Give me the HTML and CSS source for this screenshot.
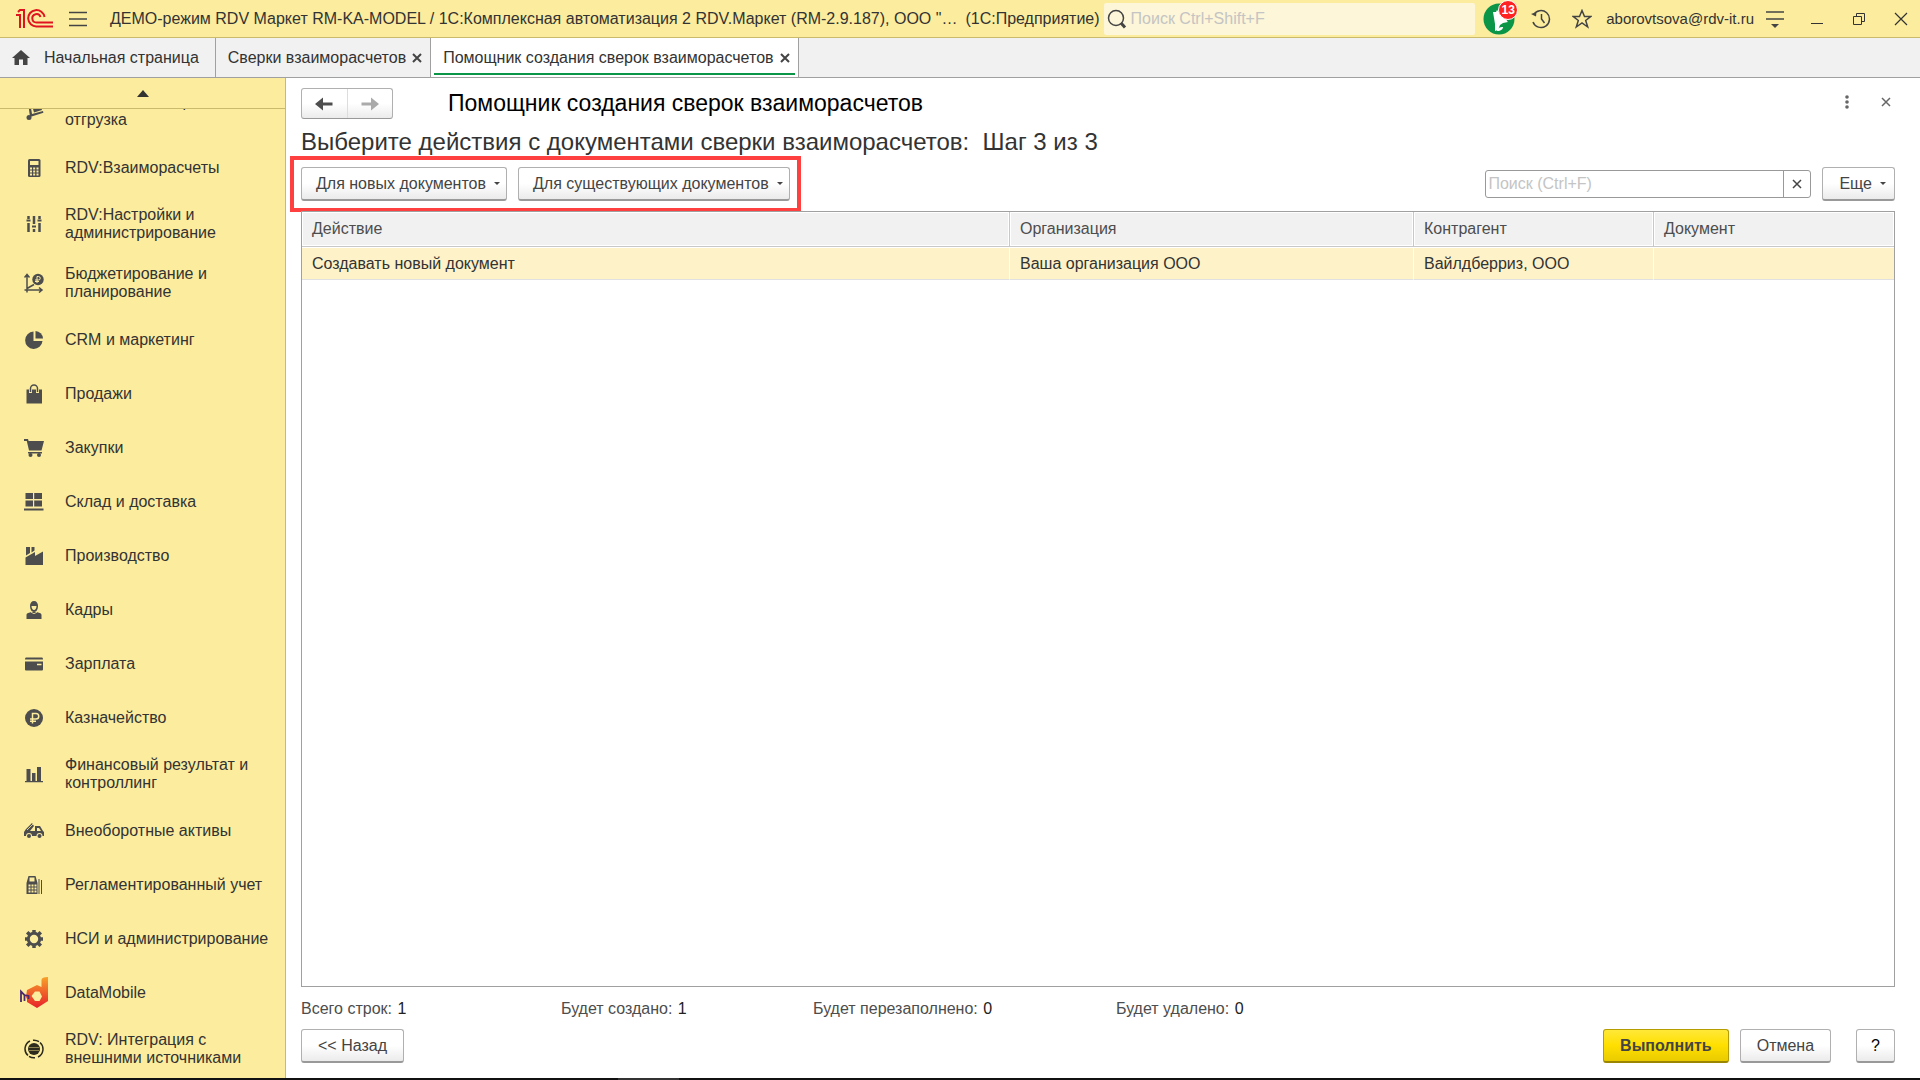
FILE: index.html
```html
<!DOCTYPE html>
<html lang="ru">

<head>
    <meta charset="UTF-8">
    <meta name="viewport" content="width=device-width, initial-scale=1.0">
    <title>Помощник создания сверок взаиморасчетов</title>
    <link rel="stylesheet" href="styles.css">
</head>

<body>
    <header class="topbar">
        <svg class="logo" viewBox="0 0 37 19" width="37" height="19" fill="none" stroke="#e0141e" stroke-width="2">
            <path d="M0 6h4v13M2 3l2-2h4v18" />
            <path d="M37 17.500H20.500a8.200 8.200 0 1 1 8-9.500" />
            <path d="M37 13.500H20.500a4.200 4.200 0 1 1 4-5.500" />
        </svg>
        <button class="icon_btn menu_btn" aria-label="Меню">
            <svg viewBox="0 0 18 18" width="18" height="18" stroke="#444" stroke-width="1.500"><path d="M0 2.500h18M0 9h18M0 15.500h18" /></svg>
        </button>
        <div class="app_title">ДЕМО-режим RDV Маркет RM-KA-MODEL / 1С:Комплексная автоматизация 2 RDV.Маркет (RM-2.9.187), ООО "…</div>
        <div class="app_name">(1С:Предприятие)</div>
        <label class="top_search">
            <svg viewBox="0 0 20 20" width="20" height="20" fill="none" stroke="#444"><circle cx="9" cy="9" r="7.500" stroke-width="1.500" /><path d="M14 14l4 4.500" stroke-width="3" /></svg>
            <input type="text" placeholder="Поиск Ctrl+Shift+F" aria-label="Поиск">
        </label>
        <button class="icon_btn bell_btn" aria-label="Оповещения">
            <svg viewBox="0 0 32 32" width="32" height="32"><circle cx="16" cy="16" r="15.500" fill="#0b9547" /><path d="M10 9l3 0 1-2 2 2c5 1 7 4 8 9l1 1-5 1-3 2-2 5-3 1 0-7-1-6z" fill="#fff" /><path d="M14 28c0-3 3-4 6-4 0 2-2 4-6 4z" fill="#fff" /></svg>
            <span class="badge">13</span>
        </button>
        <button class="icon_btn history_btn" aria-label="История">
            <svg viewBox="0 0 20 20" width="20" height="20" fill="none" stroke="#444" stroke-width="1.500"><path d="M2.500 6a8.500 8.500 0 1 1-.5 7M10.500 5v5l3 4" /><path d="M0 5l5 2.500L5.500 3z" fill="#444" stroke="none" /></svg>
        </button>
        <button class="icon_btn star_btn" aria-label="Избранное">
            <svg viewBox="0 0 20 20" width="20" height="20" fill="none" stroke="#444" stroke-width="1.500"><path d="M10 1.500l2.500 6h6.200l-5 4 2 6.500-5.700-4-5.700 4 2-6.500-5-4h6.200z" /></svg>
        </button>
        <a class="user" href="#">aborovtsova@rdv-it.ru</a>
        <button class="icon_btn settings_btn" aria-label="Настройки">
            <svg viewBox="0 0 18 17" width="18" height="17" stroke="#444" stroke-width="1.500"><path d="M0 1h18M0 8h18" /><path d="M5 13h8l-4 4z" fill="#444" stroke="none" /></svg>
        </button>
        <div class="win_btns">
            <button class="icon_btn" aria-label="Свернуть"><svg viewBox="0 0 14 14" width="14" height="14" stroke="#333"><path d="M1 11.500h12" /></svg></button>
            <button class="icon_btn" aria-label="Развернуть"><svg viewBox="0 0 14 14" width="14" height="14" fill="none" stroke="#333"><path d="M1.500 4.500h8v8h-8zM4.500 4v-2.500h8v8H10" /></svg></button>
            <button class="icon_btn" aria-label="Закрыть"><svg viewBox="0 0 14 14" width="14" height="14" stroke="#333" stroke-width="1.200"><path d="M1 1l12 12M13 1L1 13" /></svg></button>
        </div>
    </header>

    <nav class="tabs">
        <a class="tab tab_home" href="#">
            <svg viewBox="0 0 18 15" width="18" height="15" fill="#444"><path d="M9 0l9 8h-2.500v7H11V9.500H7V15H2.500V8H0z" /></svg>
            Начальная страница
        </a>
        <div class="tab"><a href="#">Сверки взаиморасчетов</a>
            <button class="icon_btn" aria-label="Закрыть вкладку"><svg viewBox="0 0 10 10" width="10" height="10" stroke="#444" stroke-width="2"><path d="M1 1l8 8M9 1L1 9" /></svg></button>
        </div>
        <div class="tab tab_active"><a href="#">Помощник создания сверок взаиморасчетов</a>
            <button class="icon_btn" aria-label="Закрыть вкладку"><svg viewBox="0 0 10 10" width="10" height="10" stroke="#444" stroke-width="2"><path d="M1 1l8 8M9 1L1 9" /></svg></button>
        </div>
    </nav>

    <div class="content">
        <aside class="sidebar">
            <button class="scroll_up" aria-label="Вверх"><svg viewBox="0 0 12 7" width="12" height="7" fill="#333"><path d="M6 0l6 7H0z" /></svg></button>
            <div class="menu_box">
                <ul class="menu">
                    <li><a href="#">
                        <svg viewBox="0 0 20 20" width="20" height="20" fill="#4d4d4d"><path d="M4 1h2l2 12 11-3 .4 1.800L6 16z" /><path d="M8 4l8-2 2 7-8 2.500z" /><path d="M11 5.500l3-.8.6 2-3 .8z" fill="#fbec9e" /><circle cx="5" cy="16.500" r="2.500" /></svg>
                        <span>RDV:Новый сбор и<br>отгрузка</span></a></li>
                    <li><a href="#">
                        <svg viewBox="0 0 20 20" width="20" height="20"><rect x="4" y="1" width="12.500" height="18" rx="1.500" fill="#4d4d4d" /><path d="M6 3h8.500v4H6zM6 9.500h2v2H6zm3.200 0h2v2h-2zm3.300 0h2v2h-2zM6 12.500h2v2H6zm3.200 0h2v2h-2zm3.300 0h2v2h-2zM6 15.500h2v2H6zm3.200 0h2v2h-2zm3.300 0h2v2h-2z" fill="#fbec9e" /></svg>
                        <span>RDV:Взаиморасчеты</span></a></li>
                    <li><a href="#">
                        <svg viewBox="0 0 20 20" width="20" height="20" stroke="#4d4d4d" fill="none"><path d="M4.500 2v3M4.500 9v9M10 2v8M10 15v3M15.500 2v3M15.500 9v9" stroke-width="2.500" /><path d="M2.500 6.500h4M8 12.500h4M13.500 6.500h4" stroke-width="2" /></svg>
                        <span>RDV:Настройки и администрирование</span></a></li>
                    <li><a href="#">
                        <svg viewBox="0 0 20 20" width="20" height="20" stroke="#4d4d4d" fill="none" stroke-width="1.500"><path d="M3 2v15h15M.5 17H3v2.500M.5 4.500L3 1.500l2.500 3M15 14.500l3 2.500-3 2.500M3 15.500l7-4" /><circle cx="14" cy="6.500" r="5.700" fill="#4d4d4d" stroke="none" /><path d="M13 10V3.500h1.500a1.600 1.600 0 0 1 0 3.500H11M11 8.500h4" stroke="#fbec9e" stroke-width="1" /></svg>
                        <span>Бюджетирование и планирование</span></a></li>
                    <li><a href="#">
                        <svg viewBox="0 0 20 20" width="20" height="20" fill="#4d4d4d"><path d="M9.500 1.500a8.700 8.700 0 1 0 9 9.500H9.500z" /><path d="M11.500 1v7.500h7.500A8 8 0 0 0 11.500 1z" /></svg>
                        <span>CRM и маркетинг</span></a></li>
                    <li><a href="#">
                        <svg viewBox="0 0 20 20" width="20" height="20"><path d="M2.500 5.500H18V19.500H2.500z" fill="#4d4d4d" /><path d="M6.500 9V5a3.500 3.500 0 0 1 7 0v4" fill="none" stroke="#fbec9e" stroke-width="3" /><path d="M6.500 8V4.500a3.500 3.500 0 0 1 7 0V8" fill="none" stroke="#4d4d4d" stroke-width="1.500" /></svg>
                        <span>Продажи</span></a></li>
                    <li><a href="#">
                        <svg viewBox="0 0 20 20" width="20" height="20" fill="#4d4d4d"><path d="M0 1h4l.6 2H20l-2.500 9.500H5L2.800 3H0zM4 14h14v1.500H4z" /><circle cx="6.500" cy="17" r="2" /><circle cx="15" cy="17" r="2" /></svg>
                        <span>Закупки</span></a></li>
                    <li><a href="#">
                        <svg viewBox="0 0 20 20" width="20" height="20" fill="#4d4d4d"><path d="M1.500 1H9v6H1.500zM10.200 1H18v6h-7.800zM1.500 8.500H9v6H1.500zM10.200 8.500H18v6h-7.800zM0 16.500h19.500v2H0z" /></svg>
                        <span>Склад и доставка</span></a></li>
                    <li><a href="#">
                        <svg viewBox="0 0 20 20" width="20" height="20" fill="#4d4d4d"><path d="M1.500 19V11.500L11 6v4l8-4.500V19zM2 1h4v6L2 9.500zM7.500 1h3v3.500l-3 2z" /></svg>
                        <span>Производство</span></a></li>
                    <li><a href="#">
                        <svg viewBox="0 0 20 20" width="20" height="20"><path d="M2.500 19v-4c0-2 3-2.500 5-3h5c2 .5 5 1 5 3v4z" fill="#4d4d4d" /><path d="M6 6c0-3 1.500-5 4-5s4 2 4 5c0 3-1.500 6-4 6S6 9 6 6z" fill="#4d4d4d" /><path d="M7.500 6h5c0 2-1 4-2.500 4s-2.500-2-2.500-4z" fill="#fbec9e" /><path d="M7 12.200l3 1.500 3-1.500" fill="none" stroke="#fbec9e" stroke-width=".8" /></svg>
                        <span>Кадры</span></a></li>
                    <li><a href="#">
                        <svg viewBox="0 0 20 20" width="20" height="20" fill="#4d4d4d"><path d="M1 5.500q0-2 1-2h16q1 0 1 2zM1 7.500h18v8q0 1-1 1H2q-1 0-1-1z" /><path d="M13 10.500h4.500" stroke="#fbec9e" stroke-width="1.500" /></svg>
                        <span>Зарплата</span></a></li>
                    <li><a href="#">
                        <svg viewBox="0 0 20 20" width="20" height="20"><circle cx="10" cy="10" r="9" fill="#4d4d4d" /><path d="M8.500 15.500V5.500h3.500a2.500 2.500 0 0 1 0 5.500H6M6 13.200h6" fill="none" stroke="#fbec9e" stroke-width="1.500" /></svg>
                        <span>Казначейство</span></a></li>
                    <li><a href="#">
                        <svg viewBox="0 0 20 20" width="20" height="20" fill="#4d4d4d"><path d="M1 17h18v1.200H1zM2.500 5H6.500v12h-4zM8 9h3.500v8H8zM13 3h4v14h-4z" /></svg>
                        <span>Финансовый результат и контроллинг</span></a></li>
                    <li><a href="#">
                        <svg viewBox="0 0 20 20" width="20" height="20" fill="#4d4d4d"><path d="M0 15v-4l2-3 6-6 2 3-4 5h5V5h5l3 5 1 1v4zM13 7v3h4l-2-3z" fill-rule="evenodd" /><path d="M3 9l6-6" stroke="#fbec9e" stroke-width=".8" /><circle cx="5" cy="15" r="3" fill="#fbec9e" /><circle cx="15.500" cy="15" r="3" fill="#fbec9e" /><circle cx="5" cy="15" r="2" /><circle cx="15.500" cy="15" r="2" /></svg>
                        <span>Внеоборотные активы</span></a></li>
                    <li><a href="#">
                        <svg viewBox="0 0 20 20" width="20" height="20"><path d="M2.500 8l2-7h7l2 7v11h-11zM14.500 4v15h1V4zM17 5v14h1V5z" fill="#4d4d4d" /><path d="M5.500 2.500h5v4h-5zM4.500 9.500h2v2h-2zm3 0h2v2h-2zm3 0h2v2h-2zM4.500 12.500h2v2h-2zm3 0h2v2h-2zm3 0h2v2h-2zM4.500 15.500h2v2h-2zm3 0h2v2h-2zm3 0h2v2h-2z" fill="#fbec9e" /></svg>
                        <span>Регламентированный учет</span></a></li>
                    <li><a href="#">
                        <svg viewBox="0 0 20 20" width="20" height="20" fill="none" stroke="#4d4d4d"><circle cx="10" cy="10" r="5.700" stroke-width="3" /><path d="M10 1v3M10 16v3M1 10h3M16 10h3M3.200 3.200l2.400 2.400M14.400 14.400l2.400 2.400M3.200 16.800l2.400-2.400M14.400 5.600l2.400-2.400" stroke-width="3.500" /></svg>
                        <span>НСИ и администрирование</span></a></li>
                    <li><a href="#" class="wide">
                        <svg viewBox="0 0 28 32" width="28" height="32">
                            <linearGradient id="dm" x1="0" y1="0" x2="0" y2="1"><stop offset="0" stop-color="#f7a128" /><stop offset="1" stop-color="#e8202a" /></linearGradient>
                            <path d="M21.500 3q0-3 6.500-3v24l-11 7-10-6V22l-1-2 1-7 10-5 4.500 2zM15 14.500l-3.500 4.500 3.500 5h4.500l2.500-4.500-2.500-5z" fill="url(#dm)" fill-rule="evenodd" />
                            <path d="M1 25V14.500l3.500 3.500v6M4.500 18l4 1v3" fill="none" stroke="#4b2a6b" stroke-width="1.800" />
                        </svg>
                        <span>DataMobile</span></a></li>
                    <li><a href="#">
                        <svg viewBox="0 0 20 20" width="20" height="20" fill="none" stroke="#2c2a1c"><circle cx="10" cy="10" r="6" fill="#2c2a1c" stroke="none" /><path d="M5 8.500h10M5 11.500h10" stroke="#8b8250" /><path d="M4 16.500a8.800 8.800 0 0 1 2-14.500M16 3.500a8.800 8.800 0 0 1-2 14.500M9 1.200a9 9 0 0 1 6 1.500M11 18.800a9 9 0 0 1-6-1.500" stroke-width="1.500" /></svg>
                        <span>RDV: Интеграция с внешними источниками</span></a></li>
                </ul>
            </div>
        </aside>

        <main class="main">
            <div class="page_head">
                <div class="nav_btns">
                    <button aria-label="Назад"><svg viewBox="0 0 18 14" width="18" height="14" fill="#4d4d4d"><path d="M0 7l8-6.500V5.500h9.500v3H8v5z" /></svg></button>
                    <button aria-label="Вперед"><svg viewBox="0 0 18 14" width="18" height="14" fill="#aaa"><path d="M18 7l-8-6.500V5.500H.5v3H10v5z" /></svg></button>
                </div>
                <h1>Помощник создания сверок взаиморасчетов</h1>
                <div class="head_tools">
                    <button class="icon_btn" aria-label="Еще действия"><svg viewBox="0 0 14 14" width="14" height="14" fill="#666"><circle cx="7" cy="2" r="1.800" /><circle cx="7" cy="7" r="1.800" /><circle cx="7" cy="12" r="1.800" /></svg></button>
                    <button class="icon_btn" aria-label="Закрыть"><svg viewBox="0 0 14 14" width="14" height="14" stroke="#666" stroke-width="1.500"><path d="M3 3l8 8M11 3l-8 8" /></svg></button>
                </div>
            </div>
            <h2>Выберите действия с документами сверки взаиморасчетов:&nbsp; Шаг 3 из 3</h2>

            <div class="toolbar">
                <div class="marked">
                    <button class="btn drop">Для новых документов</button>
                    <button class="btn drop">Для существующих документов</button>
                </div>
                <div class="find">
                    <input type="text" placeholder="Поиск (Ctrl+F)" aria-label="Поиск (Ctrl+F)">
                    <button aria-label="Очистить"><svg viewBox="0 0 10 10" width="10" height="10" stroke="#444" stroke-width="1.500"><path d="M1 1l8 8M9 1L1 9" /></svg></button>
                </div>
                <button class="btn drop more">Еще</button>
            </div>

            <div class="table_box">
                <table>
                    <thead>
                        <tr>
                            <th class="col_action">Действие</th>
                            <th class="col_org">Организация</th>
                            <th class="col_partner">Контрагент</th>
                            <th>Документ</th>
                        </tr>
                    </thead>
                    <tbody>
                        <tr>
                            <td>Создавать новый документ</td>
                            <td>Ваша организация ООО</td>
                            <td>Вайлдберриз, ООО</td>
                            <td></td>
                        </tr>
                    </tbody>
                </table>
            </div>

            <div class="stats">
                <div>Всего строк: <b>1</b></div>
                <div>Будет создано: <b>1</b></div>
                <div>Будет перезаполнено: <b>0</b></div>
                <div>Будет удалено: <b>0</b></div>
            </div>

            <div class="actions">
                <button class="btn back">&lt;&lt; Назад</button>
                <button class="btn run">Выполнить</button>
                <button class="btn">Отмена</button>
                <button class="btn help">?</button>
            </div>
        </main>
    </div>
    <div class="taskbar"><span></span></div>
</body>

</html>
```

FILE: styles.css
```css
* {
    box-sizing: border-box;
}

body {
    margin: 0;
    height: 100vh;
    display: flex;
    flex-direction: column;
    overflow: hidden;
    font-family: "Liberation Sans", Arial, sans-serif;
    font-size: 16px;
    line-height: 18px;
    color: #333;
    background-color: #fff;
}

a {
    color: inherit;
    text-decoration: none;
}

button,
input {
    font: inherit;
    color: inherit;
}

svg {
    display: block;
    flex: none;
}

.icon_btn {
    display: flex;
    padding: 0;
    border: 0;
    background: none;
    cursor: pointer;
}

/* верхняя панель */
.topbar {
    flex: none;
    display: flex;
    align-items: center;
    height: 38px;
    padding: 0 12px 0 16px;
    background-color: #fbec9e;
    border-bottom: 1px solid #c9bb6b;
    white-space: nowrap;
}

.menu_btn {
    margin: 0 23px 0 16px;
}

.app_name {
    margin: 0 4px 0 8px;
}

.top_search {
    flex: 1;
    display: flex;
    align-items: center;
    gap: 4px;
    height: 32px;
    padding-left: 3px;
    border-radius: 2px;
    background-color: #fdf6d8;
}

.top_search input {
    flex: 1;
    min-width: 0;
    padding: 0;
    border: 0;
    background: none;
    outline: none;
}

input::placeholder {
    color: #c4c4c4;
    opacity: 1;
}

.bell_btn {
    position: relative;
    margin: 0 16px 0 8px;
}

.badge {
    position: absolute;
    top: -3px;
    right: -3px;
    width: 20px;
    height: 20px;
    border: 1px solid #fff;
    border-radius: 50%;
    background-color: #f22;
    color: #fff;
    font-size: 12px;
    font-weight: bold;
    line-height: 18px;
    text-align: center;
}

.history_btn {
    margin-right: 21px;
}

.star_btn {
    margin-right: 14px;
}

.user {
    font-size: 15px;
}

.settings_btn {
    margin: 2px 26px 0 12px;
}

.win_btns {
    display: flex;
    gap: 28px;
}

/* вкладки */
.tabs {
    flex: none;
    display: flex;
    height: 40px;
    background-color: #f1f1f1;
    border-bottom: 1px solid #a0a0a0;
    white-space: nowrap;
}

.tab {
    display: flex;
    align-items: center;
    gap: 6px;
    padding: 0 8px 0 12px;
    border-right: 1px solid #a0a0a0;
}

.tab_home {
    gap: 14px;
    padding-right: 16px;
}

.tab_active {
    background-color: #fff;
    background-image: linear-gradient(#0b9547, #0b9547);
    background-repeat: no-repeat;
    background-size: calc(100% - 6px) 2px;
    background-position: 3px 35px;
}

.content {
    flex: 1;
    display: flex;
    min-height: 0;
}

/* меню разделов */
.sidebar {
    flex: none;
    display: flex;
    flex-direction: column;
    width: 286px;
    background-color: #fbec9e;
    border-right: 1px solid #c9bb6b;
}

.scroll_up {
    flex: none;
    display: flex;
    align-items: center;
    justify-content: center;
    height: 31px;
    border: 0;
    border-bottom: 1px solid #c9bb6b;
    background: none;
}

.menu_box {
    flex: 1;
    min-height: 0;
    overflow: hidden;
}

/* список прокручен на половину первого пункта */
.menu {
    margin: -28px 0 0;
    padding: 0;
    list-style: none;
}

.menu a {
    display: flex;
    align-items: center;
    gap: 21px;
    min-height: 54px;
    padding: 12px 16px 11px 24px;
}

.menu .wide {
    gap: 17px;
    padding: 2px 16px 0 20px;
}

/* рабочая область */
.main {
    flex: 1;
    display: flex;
    flex-direction: column;
    min-width: 0;
    padding: 10px 25px 15px 15px;
}

.page_head {
    display: flex;
    align-items: flex-start;
}

.nav_btns {
    display: flex;
    width: 92px;
    height: 31px;
    border: 1px solid #b0b0b0;
    border-bottom-color: #999;
    border-radius: 3px;
    background-image: linear-gradient(#fff 50%, #ebebeb);
}

.nav_btns button {
    flex: 1;
    display: flex;
    align-items: center;
    justify-content: center;
    padding: 0;
    border: 0;
    background: none;
}

.nav_btns button + button {
    border-left: 1px solid #ddd;
}

h1 {
    margin: 0 0 0 55px;
    font-size: 23px;
    font-weight: normal;
    line-height: 30px;
    color: #000;
}

.head_tools {
    display: flex;
    gap: 25px;
    margin-left: auto;
    padding: 7px 2px 0 0;
}

h2 {
    margin: 8px 0 10px;
    font-size: 24px;
    font-weight: normal;
    line-height: 30px;
}

.toolbar {
    display: flex;
    align-items: center;
    gap: 11px;
}

/* рамка вокруг двух кнопок */
.marked {
    display: flex;
    gap: 11px;
    margin-right: auto;
    outline: 4px solid #ff4040;
    outline-offset: 7px;
}

.btn {
    height: 34px;
    padding: 0 16px;
    border: 1px solid #b0b0b0;
    border-bottom: 2px solid #999;
    border-radius: 3px;
    background-image: linear-gradient(#fff 50%, #ebebeb);
    color: #444;
    white-space: nowrap;
}

.drop {
    display: flex;
    align-items: center;
    gap: 8px;
    padding: 0 6px 0 14px;
}

.drop::after {
    content: "";
    border: 3px solid transparent;
    border-top-color: #444;
    border-bottom: 0;
}

.more {
    padding: 0 8px 0 16px;
}

.find {
    display: flex;
    width: 326px;
    height: 28px;
    border: 1px solid #999;
    border-radius: 3px;
}

.find input {
    flex: 1;
    min-width: 0;
    padding: 0 2px;
    border: 0;
    background: none;
    outline: none;
}

.find button {
    display: flex;
    align-items: center;
    justify-content: center;
    width: 27px;
    padding: 0;
    border: 0;
    border-left: 1px solid #999;
    background: none;
}

.table_box {
    flex: 1;
    margin-top: 10px;
    border: 1px solid #a0a0a0;
}

table {
    width: 100%;
    border-spacing: 0;
    table-layout: fixed;
}

th,
td {
    padding: 0 10px;
    text-align: left;
    font-weight: normal;
}

th {
    height: 35px;
    border-right: 1px solid #c8c8c8;
    border-bottom: 1px solid #c8c8c8;
    background-color: #f1f1f1;
    box-shadow: inset 0 0 0 1px #fff;
    color: #4d4d4d;
}

td {
    height: 33px;
    border-top: 1px solid #fff;
    border-right: 1px solid #fff;
    border-bottom: 1px solid #e0e0e0;
    background-color: #fdf2c8;
}

th:last-child,
td:last-child {
    border-right: 0;
}

.col_action {
    width: 708px;
}

.col_org {
    width: 404px;
}

.col_partner {
    width: 240px;
}

.stats {
    display: grid;
    grid-template-columns: 260px 252px 303px auto;
    margin: 13px 0 11px;
    color: #4d4d4d;
}

.stats b {
    margin-left: 1px;
    font-weight: normal;
    color: #222;
}

.actions {
    display: flex;
    gap: 11px;
}

.back {
    margin-right: auto;
}

.run {
    border-color: #b59d00;
    border-bottom-color: #9a8600;
    background-image: linear-gradient(#ffe838, #ffdf00 50%, #e9cb00);
    font-weight: bold;
}

.help {
    margin-left: 14px;
    padding: 0 14px;
    color: #000;
}

/* полоска панели задач */
.taskbar {
    flex: none;
    height: 2px;
    padding-left: 618px;
    background-color: #111;
}

.taskbar span {
    display: block;
    width: 61px;
    height: 2px;
    background-color: #333;
}
```
